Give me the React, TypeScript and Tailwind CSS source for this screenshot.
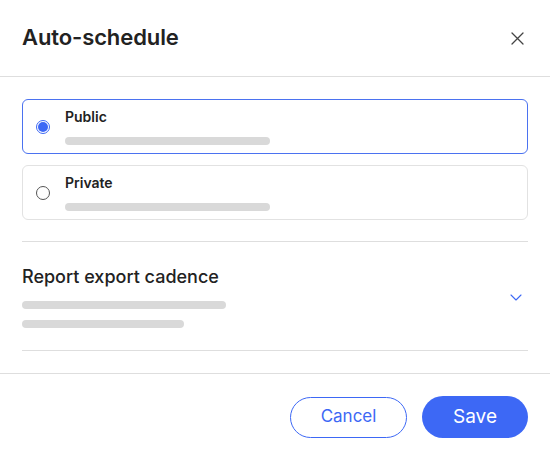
import { useState } from "react";

const options = [
  { id: "public", label: "Public" },
  { id: "private", label: "Private" },
];

export default function App() {
  const [choice, setChoice] = useState("public");

  return (
    <div className="w-[550px] h-[460px] bg-white text-[#222] font-['Inter','Liberation_Sans',sans-serif]">
      <div className="h-[77px] flex items-center justify-between pl-[22px] pr-[26px] border-b border-[#dedede]">
        <h1 className="text-[22px] font-semibold tracking-[-0.1px] pb-[1px]">Auto-schedule</h1>
        <button className="w-[14px] h-[14px] flex items-center justify-center text-[#444]">
          <svg width="13" height="13" viewBox="0 0 13 13" fill="none" stroke="currentColor" strokeWidth="1.3" strokeLinecap="round">
            <path d="M1 1L12 12M12 1L1 12" />
          </svg>
        </button>
      </div>

      <div className="px-[22px] pt-[22px]">
        <div className="flex flex-col gap-[11px]">
          {options.map((o) => {
            const active = choice === o.id;
            return (
              <label
                key={o.id}
                onClick={() => setChoice(o.id)}
                className={
                  active
                    ? "h-[55px] flex items-center rounded-[6px] border border-[#4b72f0] pl-[13px] cursor-pointer"
                    : "h-[55px] flex items-center rounded-[6px] border border-[#e2e2e2] pl-[13px] cursor-pointer"
                }
              >
                <span
                  className={
                    active
                      ? "w-[14px] h-[14px] rounded-full border border-[#3d68f5] flex items-center justify-center"
                      : "w-[14px] h-[14px] rounded-full border border-[#555] flex items-center justify-center"
                  }
                >
                  {active && <span className="w-[10px] h-[10px] rounded-full bg-[#3d68f5]" />}
                </span>
                <div className="ml-[15px] flex flex-col">
                  <span className="text-[14px] font-semibold leading-[18px]">{o.label}</span>
                  <span className="mt-[11px] w-[205px] h-[8px] rounded-full bg-[#d9d9d9]" />
                </div>
              </label>
            );
          })}
        </div>

        <div className="mt-[21px] border-t border-[#dedede] h-[110px] flex items-center justify-between border-b">
          <div className="flex flex-col pt-[2px]">
            <span className="text-[18px] font-medium leading-[22px]">Report export cadence</span>
            <span className="mt-[13px] w-[204px] h-[8px] rounded-full bg-[#d9d9d9]" />
            <span className="mt-[11px] w-[162px] h-[8px] rounded-full bg-[#d9d9d9]" />
          </div>
          <svg className="mr-[6px] mt-[2px]" width="12" height="7" viewBox="0 0 12 7" fill="none" stroke="#3d68f5" strokeWidth="1.1" strokeLinecap="round" strokeLinejoin="round">
            <path d="M1 1L6 6L11 1" />
          </svg>
        </div>
      </div>

      <div className="mt-[22px] border-t border-[#dedede] flex justify-end items-center gap-[15px] pr-[22px] pt-[22px]">
        <button className="w-[117px] h-[41px] rounded-full border border-[#3d68f5] text-[#3d68f5] text-[17px]">
          Cancel
        </button>
        <button className="w-[106px] h-[42px] rounded-full bg-[#3d68f5] text-white text-[19px]">
          Save
        </button>
      </div>
    </div>
  );
}
